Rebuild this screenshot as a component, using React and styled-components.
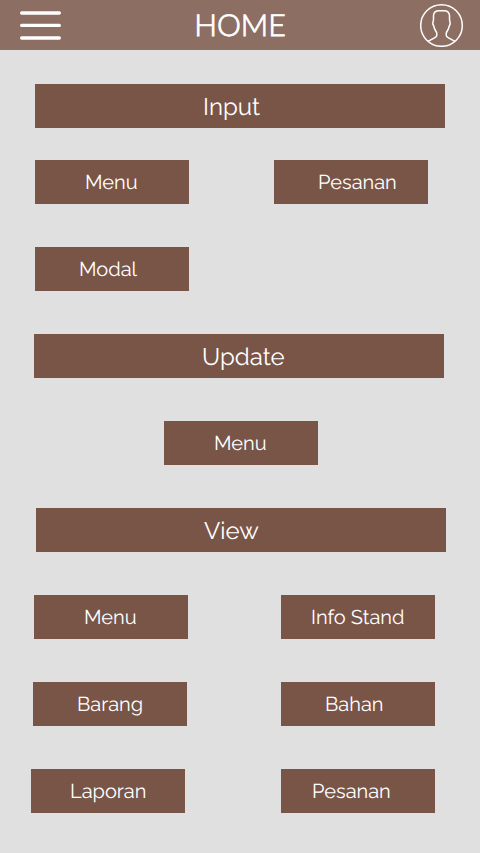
import React from "react";
import styled, { createGlobalStyle } from "styled-components";

const GlobalStyle = createGlobalStyle`
  *, *::before, *::after { box-sizing: border-box; }
  body {
    margin: 0;
    background: #e0e0e0;
    font-family: Raleway, Lato, sans-serif;
    color: #fff;
    text-rendering: geometricPrecision;
  }
`;

const Screen = styled.div`
  display: flex;
  flex-direction: column;
  width: 480px;
  height: 853px;
  overflow: hidden;
  background: #e0e0e0;
`;

const AppBar = styled.header`
  display: grid;
  grid-template-columns: 80px 1fr 80px;
  grid-template-rows: 50px;
  align-items: center;
  height: 50px;
  background: #8d6e63;
`;

const IconButton = styled.button`
  display: flex;
  justify-content: ${({ $end }) => ($end ? "flex-end" : "flex-start")};
  padding: ${({ $end }) => ($end ? "0 16px 0 0" : "0 0 0 20px")};
  border: 0;
  background: none;
  color: #fff;

  svg { display: block; }
`;

const Title = styled.h1`
  margin: 0;
  font: 300 30.2px/50px Lato, sans-serif;
  text-align: center;
  -webkit-text-stroke: 0.9px #fff;
`;

const Content = styled.main`
  display: flex;
  flex-direction: column;
  gap: 43px;
  padding-top: 34px;
`;

const Heading = styled.h2`
  width: 410px;
  height: 44px;
  margin: 0 0 ${({ $tight }) => ($tight ? "-11px" : "0")} ${({ $inset }) => $inset}px;
  padding-left: ${({ $indent }) => $indent}px;
  background: #795548;
  font-size: 24px;
  font-weight: 400;
  line-height: 46px;
`;

const Row = styled.div`
  display: flex;
  padding-left: ${({ $inset }) => $inset}px;
  gap: ${({ $gap }) => $gap || 0}px;
`;

const Action = styled.button`
  width: 154px;
  height: 44px;
  padding: 0 0 0 ${({ $indent }) => $indent}px;
  border: 0;
  background: #795548;
  color: #fff;
  font-family: inherit;
  font-size: 20px;
  font-weight: 400;
  line-height: 44px;
  text-align: left;
  text-rendering: inherit;
  white-space: nowrap;
`;

const MenuIcon = () => (
  <svg width="41" height="30" viewBox="0 0 41 30" fill="none" stroke="currentColor" strokeWidth="3.4" strokeLinecap="round">
    <path d="M1.7 3H39.3M1.7 15.4H39.3M1.7 28H39.3" />
  </svg>
);

const ProfileIcon = () => (
  <svg width="44" height="44" viewBox="0 0 44 44" fill="none" stroke="currentColor" strokeWidth="1.5" strokeLinejoin="round">
    <circle cx="21.5" cy="22.5" r="20.8" />
    <path d="M8 38.4L14.5 34.8Q16.8 33.6 16.8 32.2V30.4Q16.8 29.6 15.2 27Q14.1 25.2 13.9 23.4Q12.7 21.8 12.8 19.2Q13.6 18.2 13.5 15.5V12.5Q14 7.7 19 7.7H24Q29 7.7 29.5 12.5V15.5Q29.4 18.2 30.2 19.2Q30.3 21.8 29.1 23.4Q28.9 25.2 27.8 27Q26.2 29.6 26.2 30.4V32.2Q26.2 33.6 28.5 34.8L35 38.4" />
  </svg>
);

export default function App() {
  return (
    <>
      <GlobalStyle />
      <Screen>
        <AppBar>
          <IconButton aria-label="Open navigation"><MenuIcon /></IconButton>
          <Title>HOME</Title>
          <IconButton $end aria-label="Profile"><ProfileIcon /></IconButton>
        </AppBar>
        <Content>
          <Heading $tight $inset={35} $indent={168}>Input</Heading>
          <Row $inset={35} $gap={85}>
            <Action $indent={50}>Menu</Action>
            <Action $indent={44}>Pesanan</Action>
          </Row>
          <Row $inset={35}>
            <Action $indent={44}>Modal</Action>
          </Row>
          <Heading $inset={34} $indent={168}>Update</Heading>
          <Row $inset={164}>
            <Action $indent={50}>Menu</Action>
          </Row>
          <Heading $inset={36} $indent={168}>View</Heading>
          <Row $inset={34} $gap={93}>
            <Action $indent={50}>Menu</Action>
            <Action $indent={30}>Info Stand</Action>
          </Row>
          <Row $inset={33} $gap={94}>
            <Action $indent={44}>Barang</Action>
            <Action $indent={44}>Bahan</Action>
          </Row>
          <Row $inset={31} $gap={96}>
            <Action $indent={39}>Laporan</Action>
            <Action $indent={31}>Pesanan</Action>
          </Row>
        </Content>
      </Screen>
    </>
  );
}
